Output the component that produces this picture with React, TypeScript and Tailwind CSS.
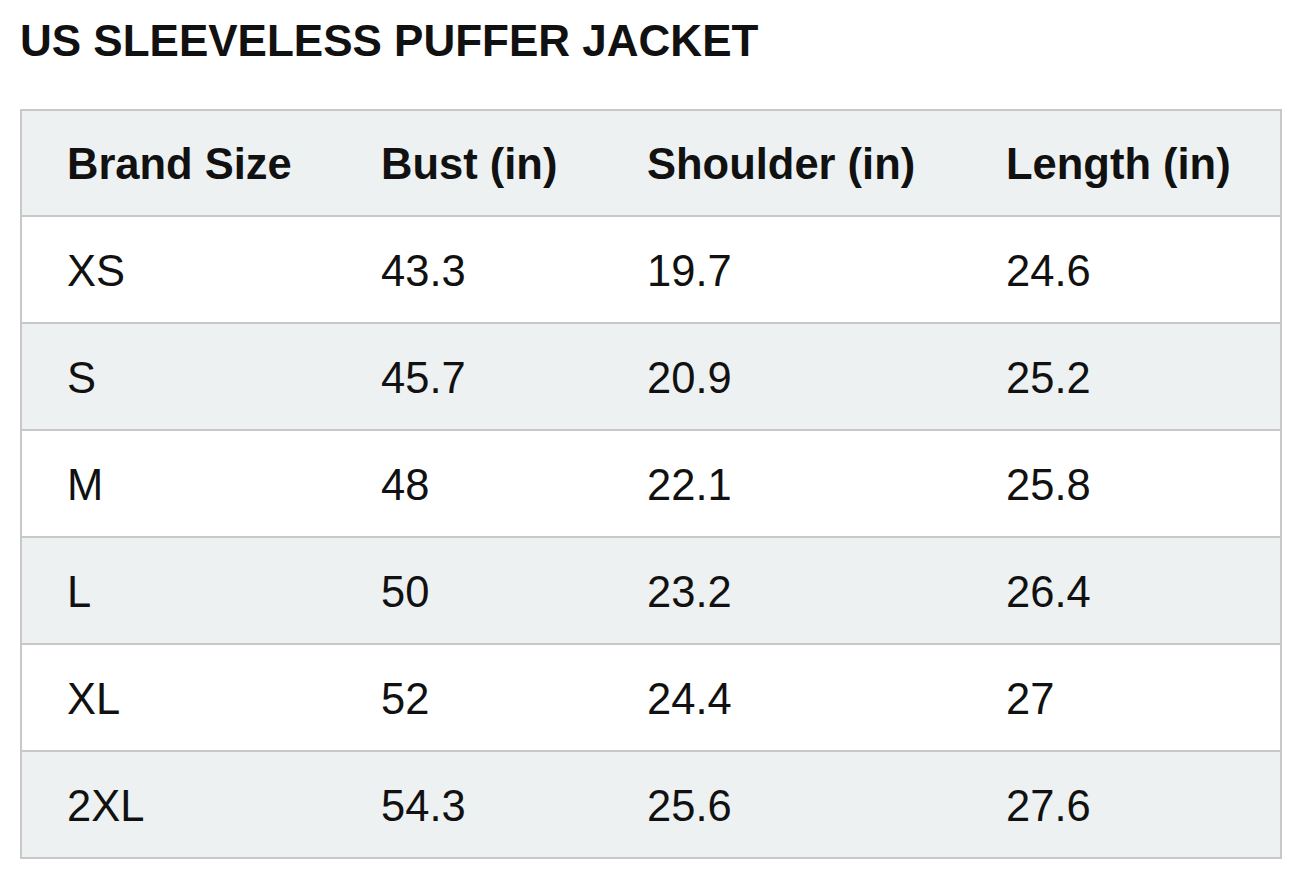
const headers = ["Brand Size", "Bust (in)", "Shoulder (in)", "Length (in)"]

const rows = [
  ["XS", "43.3", "19.7", "24.6"],
  ["S", "45.7", "20.9", "25.2"],
  ["M", "48", "22.1", "25.8"],
  ["L", "50", "23.2", "26.4"],
  ["XL", "52", "24.4", "27"],
  ["2XL", "54.3", "25.6", "27.6"],
]

const cols = "grid grid-cols-[314px_266px_359px_1fr] items-center pl-[45px] pt-[4px]"

export default function App() {
  return (
    <div
      className="min-h-[882px] w-full bg-white text-[#111111]"
      style={{ fontFamily: '"Liberation Sans", Arial, sans-serif' }}
    >
      <h1 className="pl-[20px] pt-[19px] text-[44px] font-bold leading-none tracking-normal">
        US SLEEVELESS PUFFER JACKET
      </h1>

      <div className="ml-[20px] mt-[46px] w-[1262px] border-2 border-[#c8c8c8]">
        <div className={`${cols} h-[104px] bg-[#eef1f1] text-[43.5px] font-bold leading-none`}>
          {headers.map((h) => (
            <div key={h}>{h}</div>
          ))}
        </div>
        {rows.map((r, i) => (
          <div
            key={r[0]}
            className={`${cols} h-[107px] border-t-2 border-[#c8c8c8] text-[43.5px] leading-none ${
              i % 2 === 0 ? "bg-white" : "bg-[#eef1f1]"
            }`}
          >
            {r.map((c, j) => (
              <div key={j}>{c}</div>
            ))}
          </div>
        ))}
      </div>
    </div>
  )
}
